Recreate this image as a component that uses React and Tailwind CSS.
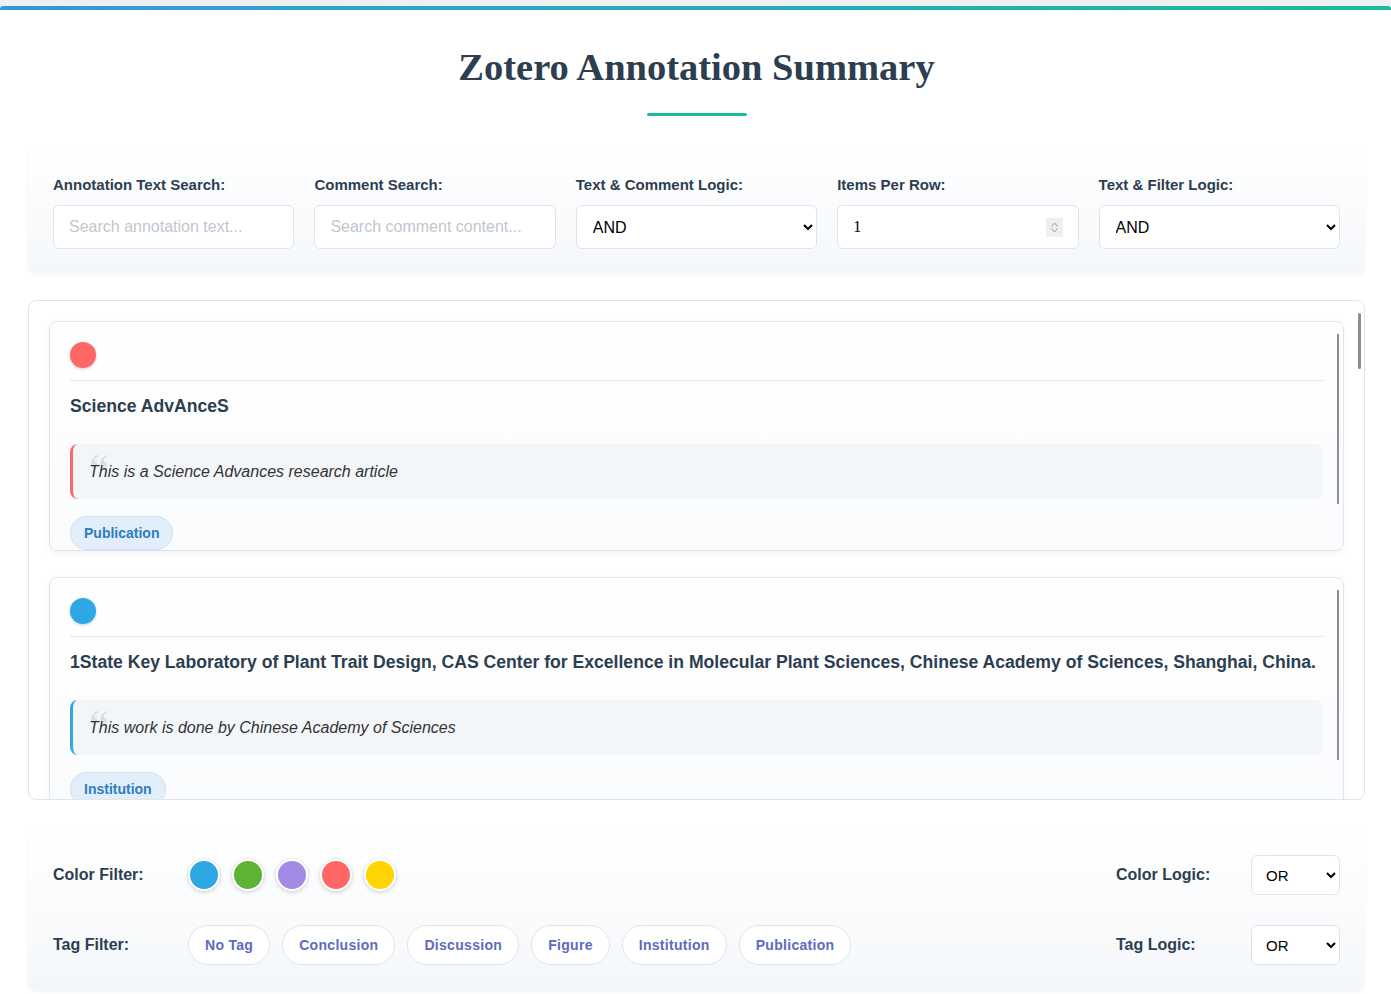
import { useState } from 'react';

const COLORS = ['#2ea8e5', '#5fb236', '#a28ae5', '#ff6666', '#ffd400'];
const TAGS = ['No Tag', 'Conclusion', 'Discussion', 'Figure', 'Institution', 'Publication'];

const ANNOTATIONS = [
  {
    id: 1,
    color: '#ff6666',
    text: 'Science AdvAnceS',
    comment: 'This is a Science Advances research article',
    tags: ['Publication'],
  },
  {
    id: 2,
    color: '#2ea8e5',
    text: '1State Key Laboratory of Plant Trait Design, CAS Center for Excellence in Molecular Plant Sciences, Chinese Academy of Sciences, Shanghai, China.',
    comment: 'This work is done by Chinese Academy of Sciences',
    tags: ['Institution'],
  },
];

const sans = { fontFamily: '"Liberation Sans", Arial, sans-serif' };

function Field({ label, children }) {
  return (
    <div className="flex flex-col">
      <label className="block h-5 mb-3 pt-[2px] text-[15px] leading-5 font-bold text-[#2c3e50]">{label}</label>
      {children}
    </div>
  );
}

function AnnotationCard({ item }) {
  return (
    <div className="relative h-[230px] shrink-0 overflow-hidden rounded-lg border border-[#e1e5ea] bg-gradient-to-b from-white to-[#fafbfd] shadow-[0_2px_6px_rgba(0,0,0,0.06)]">
      <div className="px-5 pt-5">
        <div className="pb-3 border-b border-[#e1e5ea]">
          <div className="w-[26px] h-[26px] rounded-full shadow-[0_1px_3px_rgba(0,0,0,0.2)]" style={{ backgroundColor: item.color }} />
        </div>
        <div className="mt-[15px] text-[17.6px] leading-[21px] font-bold text-[#2c3e50] whitespace-nowrap">{item.text}</div>
        <div
          className="relative mt-[27px] rounded-lg bg-[#f3f6f9] border-l-[3px] pl-[16px] pr-4 py-[15px] before:content-['“'] before:absolute before:left-[16px] before:top-[4px] before:text-[46px] before:leading-none before:text-[#d8dee5] before:font-['Liberation_Serif']"
          style={{ borderLeftColor: item.color }}
        >
          <p className="relative italic text-[16px] leading-[25px] text-[#333]">{item.comment}</p>
        </div>
        <div className="mt-[17px] flex gap-2">
          {item.tags.map(t => (
            <span key={t} className="px-[13px] py-[7px] rounded-full border border-[#cfe1f1] bg-[#e2eef9] text-[14px] leading-[18px] font-bold text-[#2d7dc0]">
              {t}
            </span>
          ))}
        </div>
      </div>
      {/* scrollbar de la tarjeta */}
      <div className="absolute right-[4px] top-[12px] w-[2px] h-[170px] bg-[#8a8d93]" />
    </div>
  );
}

function LogicSelect({ value, onChange }) {
  return (
    <select
      className="ml-[15px] w-[89px] h-[40px] pl-[10px] pr-2 rounded-md border border-[#dfe4ea] bg-white text-[15px] text-black outline-none"
      value={value}
      onChange={onChange}
    >
      <option>OR</option>
      <option>AND</option>
    </select>
  );
}

export default function App() {
  const [annotationSearch, setAnnotationSearch] = useState('');
  const [commentSearch, setCommentSearch] = useState('');
  const [textLogic, setTextLogic] = useState('AND');
  const [perRow, setPerRow] = useState(1);
  const [filterLogic, setFilterLogic] = useState('AND');
  const [colorLogic, setColorLogic] = useState('OR');
  const [tagLogic, setTagLogic] = useState('OR');

  const inputCls = 'w-full h-[44px] px-[15px] rounded-md border border-[#dfe4ea] bg-white text-[16px] text-black placeholder:text-[#c0c7cf] outline-none';
  const selectCls = 'w-full h-[44px] pl-[12px] pr-[8px] rounded-md border border-[#dfe4ea] bg-white text-[16px] text-black outline-none';

  return (
    <div className="min-h-[994px] bg-[#eef1f4] pt-[6px]" style={sans}>
      <div className="bg-white min-h-[988px]">
        <div className="h-[4px] rounded-t-[3px] bg-gradient-to-r from-[#3498db] to-[#1abc9c]" />
        <div className="pl-[28px] pr-[26px] pb-[3px]">
          <h1
            className="pt-[35px] text-center text-[38.5px] leading-[44px] font-bold text-[#2c3e50]"
            style={{ fontFamily: '"Liberation Serif", "Times New Roman", serif' }}
          >
            Zotero Annotation Summary
          </h1>
          <div className="mx-auto mt-[24px] w-[100px] h-[3px] rounded-full bg-[#1abc9c]" />

          {/* Controles de búsqueda */}
          <div className="mt-[32px] grid grid-cols-5 gap-5 p-[25px] rounded-lg bg-gradient-to-b from-white to-[#f4f7fa] shadow-[0_1px_4px_rgba(0,0,0,0.04)]">
            <Field label="Annotation Text Search:">
              <input className={inputCls} placeholder="Search annotation text..." value={annotationSearch} onChange={e => setAnnotationSearch(e.target.value)} />
            </Field>
            <Field label="Comment Search:">
              <input className={inputCls + ' border-[#bcd2e8]'} placeholder="Search comment content..." value={commentSearch} onChange={e => setCommentSearch(e.target.value)} />
            </Field>
            <Field label="Text & Comment Logic:">
              <select className={selectCls} value={textLogic} onChange={e => setTextLogic(e.target.value)}>
                <option>AND</option>
                <option>OR</option>
              </select>
            </Field>
            <Field label="Items Per Row:">
              <div className="relative">
                <input
                  type="number"
                  min="1"
                  className={inputCls + ' [appearance:textfield] [&::-webkit-inner-spin-button]:appearance-none'}
                  style={{ fontFamily: '"Liberation Serif", serif' }}
                  value={perRow}
                  onChange={e => setPerRow(e.target.value)}
                />
                <span className="absolute right-[16px] top-[13px] w-[17px] h-[19px] bg-[#efefef] flex flex-col items-center justify-center gap-[1px] pointer-events-none">
                  <svg width="7" height="5" viewBox="0 0 7 5" fill="none" stroke="#9a9a9a" strokeWidth="1">
                    <path d="M0.5 4.5 L3.5 1 L6.5 4.5" />
                  </svg>
                  <svg width="7" height="5" viewBox="0 0 7 5" fill="none" stroke="#9a9a9a" strokeWidth="1">
                    <path d="M0.5 0.5 L3.5 4 L6.5 0.5" />
                  </svg>
                </span>
              </div>
            </Field>
            <Field label="Text & Filter Logic:">
              <select className={selectCls} value={filterLogic} onChange={e => setFilterLogic(e.target.value)}>
                <option>AND</option>
                <option>OR</option>
              </select>
            </Field>
          </div>

          {/* Lista de anotaciones */}
          <div className="relative mt-[26px] h-[500px] overflow-hidden rounded-lg border border-[#e1e5ea] bg-white">
            <div className="flex flex-col gap-[26px] p-5">
              {ANNOTATIONS.map(a => (
                <AnnotationCard key={a.id} item={a} />
              ))}
            </div>
            <div className="absolute right-[3px] top-[12px] w-[3px] h-[56px] rounded-sm bg-[#8a8d93]" />
          </div>

          {/* Filtros */}
          <div className="mt-[31px] flex flex-col gap-[30px] px-[25px] pt-[24px] pb-[26px] rounded-lg bg-gradient-to-b from-white to-[#f4f7fa] shadow-[0_1px_4px_rgba(0,0,0,0.04)]">
            <div className="flex items-center h-[40px]">
              <span className="w-[120px] text-[16px] font-bold text-[#2c3e50]">Color Filter:</span>
              <div className="ml-[15px] flex gap-3">
                {COLORS.map(c => (
                  <button
                    key={c}
                    className="w-8 h-8 rounded-full border-[2px] border-white shadow-[0_1px_4px_rgba(0,0,0,0.2)]"
                    style={{ backgroundColor: c }}
                  />
                ))}
              </div>
              <div className="ml-auto flex items-center">
                <span className="w-[120px] text-[16px] font-bold text-[#2c3e50]">Color Logic:</span>
                <LogicSelect value={colorLogic} onChange={e => setColorLogic(e.target.value)} />
              </div>
            </div>
            <div className="flex items-center h-[40px]">
              <span className="w-[120px] text-[16px] font-bold text-[#2c3e50]">Tag Filter:</span>
              <div className="ml-[15px] flex gap-3">
                {TAGS.map(t => (
                  <button
                    key={t}
                    className="h-[40px] px-4 rounded-full border border-[#e1e5ea] bg-white text-[14px] font-bold tracking-[0.3px] text-[#5c6bc0]"
                  >
                    {t}
                  </button>
                ))}
              </div>
              <div className="ml-auto flex items-center">
                <span className="w-[120px] text-[16px] font-bold text-[#2c3e50]">Tag Logic:</span>
                <LogicSelect value={tagLogic} onChange={e => setTagLogic(e.target.value)} />
              </div>
            </div>
          </div>
        </div>
      </div>
    </div>
  );
}
